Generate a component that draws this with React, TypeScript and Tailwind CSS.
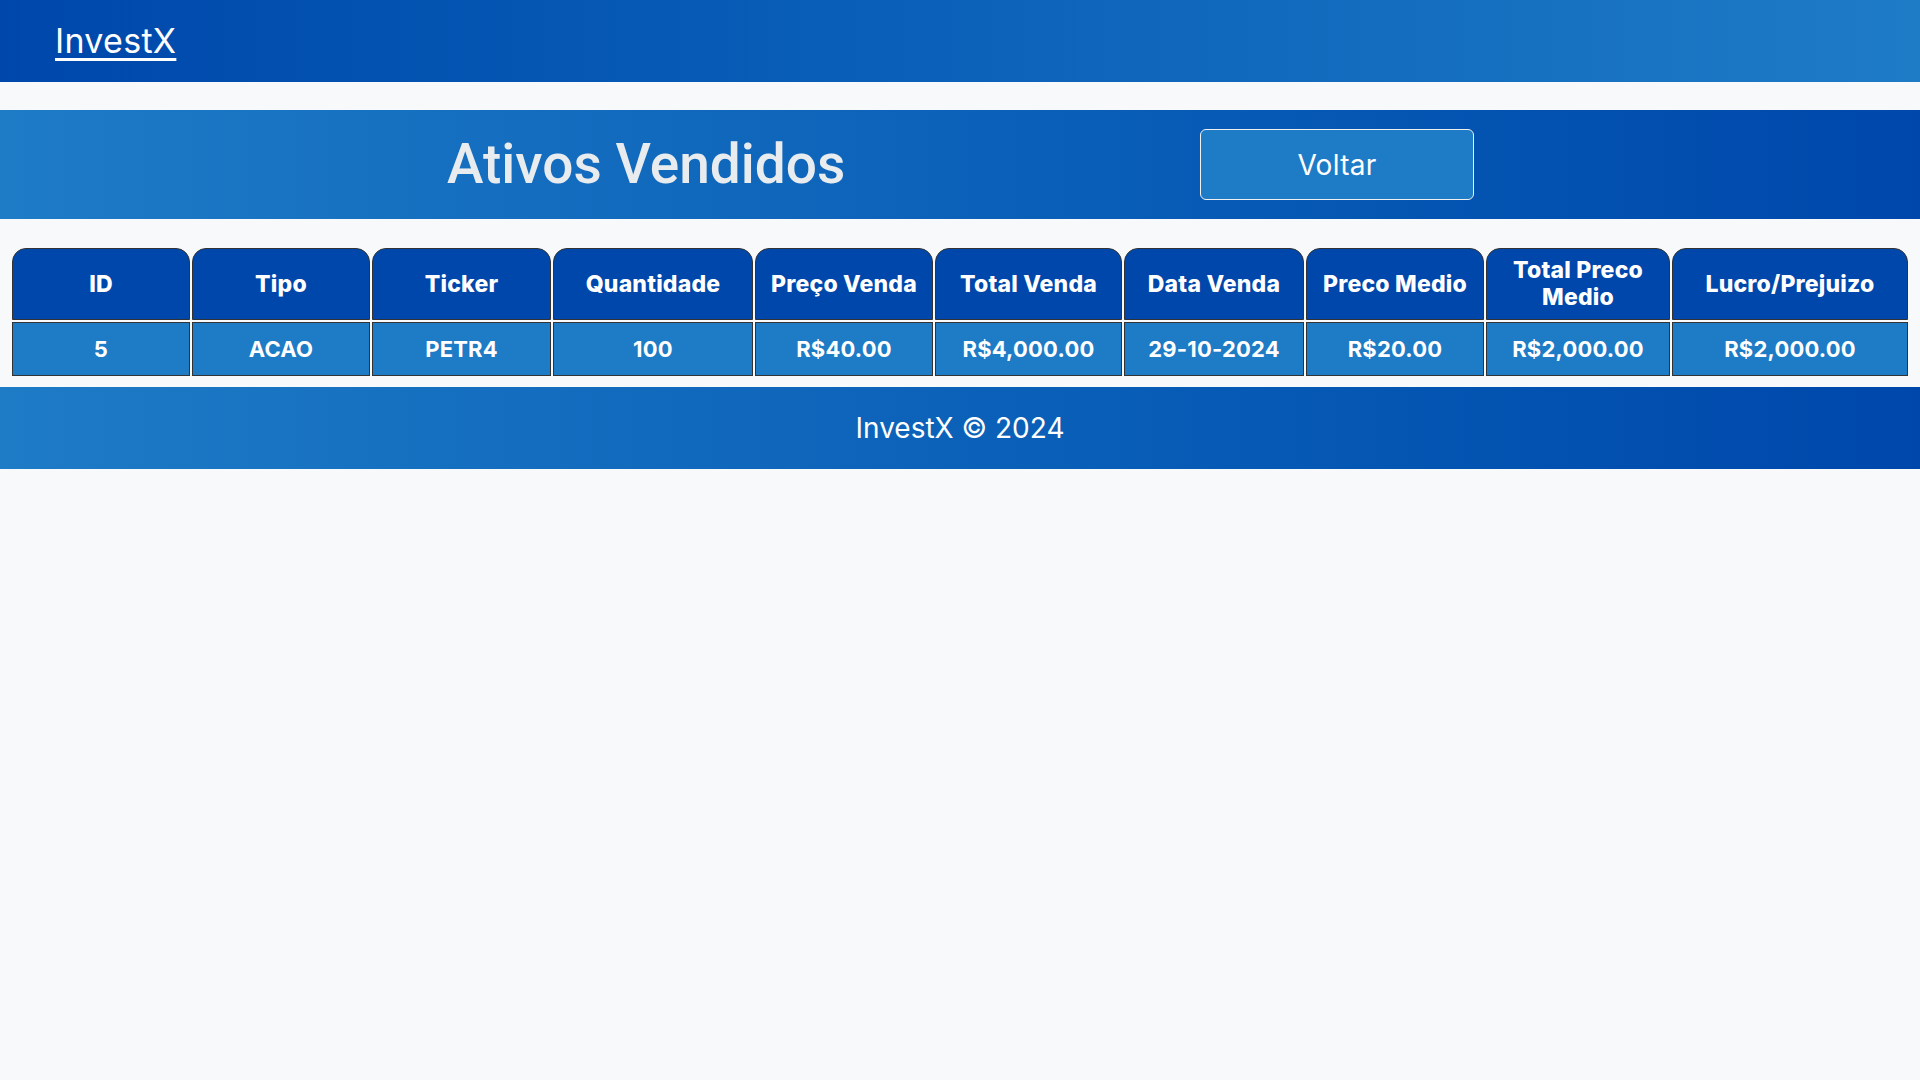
import React from "react";

const headers: { label: string; w: string }[] = [
  { label: "ID", w: "w-[178px]" },
  { label: "Tipo", w: "w-[178px]" },
  { label: "Ticker", w: "w-[179px]" },
  { label: "Quantidade", w: "w-[200px]" },
  { label: "Preço Venda", w: "w-[178px]" },
  { label: "Total Venda", w: "w-[187px]" },
  { label: "Data Venda", w: "w-[180px]" },
  { label: "Preco Medio", w: "w-[178px]" },
  { label: "Total Preco Medio", w: "w-[184px]" },
  { label: "Lucro/Prejuizo", w: "w-[236px]" },
];

const row = [
  "5",
  "ACAO",
  "PETR4",
  "100",
  "R$40.00",
  "R$4,000.00",
  "29-10-2024",
  "R$20.00",
  "R$2,000.00",
  "R$2,000.00",
];

export default function App() {
  return (
    <div className="min-h-[1080px] bg-[#f8f9fa] font-['Inter','Liberation_Sans',sans-serif]">
      <header className="h-[82px] flex items-center pl-[55px] bg-gradient-to-r from-[#0047ab] to-[#1e7bc6]">
        <a href="#" className="text-white text-[34px] leading-none underline underline-offset-[5px] decoration-[3px] tracking-[0.3px]">
          InvestX
        </a>
      </header>

      <section className="mt-[28px] h-[109px] flex items-center bg-gradient-to-r from-[#1e7bc6] to-[#0047ab]">
        <div className="ml-[447px] w-[396px] whitespace-nowrap">
          <h1 className="font-['Roboto',sans-serif] font-medium text-[55px] leading-none text-[#e9ecef]">
            Ativos Vendidos
          </h1>
        </div>
        <button className="ml-[357px] w-[274px] h-[71px] rounded-[6px] border border-[#f0f0f0] bg-[#1e7bc6] text-white text-[28px] leading-none tracking-[0.3px]">
          Voltar
        </button>
      </section>

      <table className="mx-[10px] mt-[27px] mb-[9px] w-[1900px] table-fixed border-separate border-spacing-[2px]">
        <thead>
          <tr>
            {headers.map((h) => (
              <th
                key={h.label}
                className={`${h.w} bg-[#0047ab] text-white font-extrabold text-[23px] leading-[27px] tracking-[0.2px] py-2 px-1 border border-[#333] rounded-t-[14px] text-center`}
              >
                {h.label}
              </th>
            ))}
          </tr>
        </thead>
        <tbody>
          <tr>
            {row.map((c, i) => (
              <td
                key={i}
                className="bg-[#1e7bc6] text-white font-bold text-[22px] leading-[28px] tracking-[0.2px] py-3 px-2 border border-[#333] text-center"
              >
                {c}
              </td>
            ))}
          </tr>
        </tbody>
      </table>

      <footer className="h-[82px] flex items-center justify-center bg-gradient-to-r from-[#1e7bc6] to-[#0047ab]">
        <p className="text-white text-[28px] leading-none">InvestX © 2024</p>
      </footer>
    </div>
  );
}
